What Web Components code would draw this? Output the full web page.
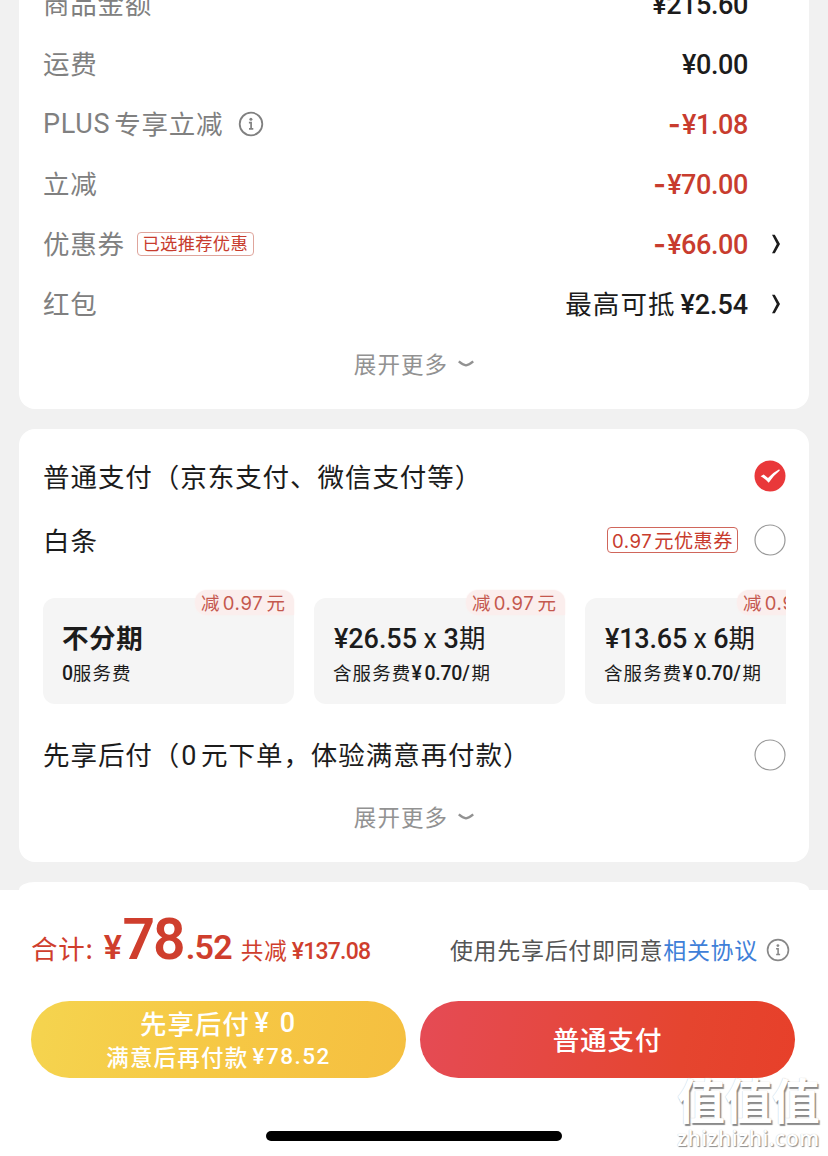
<!DOCTYPE html>
<html lang="zh-CN">
<head>
<meta charset="utf-8">
<title>订单结算</title>
<style>
html,body{margin:0;padding:0}
body{width:828px;height:1156px;overflow:hidden;background:#f1f1f1;font-family:"Noto Sans CJK SC",sans-serif;color:#1c1c1c}
</style>
</head>
<body>
<checkout-page></checkout-page>
<script>
const define=(name,css,html)=>{
  const t=document.createElement('template');
  t.innerHTML=`<style>*{box-sizing:border-box}${css}</style>${html}`;
  customElements.define(name,class extends HTMLElement{
    constructor(){super();this.attachShadow({mode:'open'}).append(t.content.cloneNode(true));}
  });
};

define('money-text',
  `:host{display:inline-block;font-family:Roboto,"Noto Sans CJK SC",sans-serif;font-weight:500;font-size:27px;letter-spacing:-.4px;white-space:pre}
   ::slotted(i){font-style:normal;font-family:Inter,sans-serif;letter-spacing:1.4px;font-weight:700}`,
  `<slot></slot>`);

define('info-icon',
  `:host{display:block;width:26px;height:26px;color:#808080}svg{display:block;width:100%;height:100%}`,
  `<svg viewBox="0 0 26 26" fill="none" stroke="currentColor" stroke-width="1.8"><circle cx="13" cy="13" r="11.3"/><path d="M10.9 11.6h2.2v6.1M11 17.8h4.3" stroke-width="1.7"/><circle cx="12.9" cy="8.2" r="1.5" fill="currentColor" stroke="none"/></svg>`);

define('chevron-icon',
  `:host{display:block;width:10px;height:20px}svg{display:block}`,
  `<svg width="10" height="20" viewBox="0 0 10 20"><path d="M1 0.8H3.8L9 10 3.8 19.2H1L5.8 10Z" fill="#1c1c1c"/></svg>`);

define('price-row',
  `:host{display:flex;height:60px;align-items:center;padding:0 61px 0 24px;color:#808080;font-size:26.5px;letter-spacing:.75px;line-height:36px;white-space:nowrap}
   .k{display:flex;align-items:center}
   .k ::slotted(span){margin-top:-3px}
   .v{margin-left:auto;display:flex;align-items:center;color:#1c1c1c}
   .v ::slotted(money-text){margin-top:2px}
   .v ::slotted(span){margin-top:-3px}
   :host([minus]) .v{color:#c83c2e}
   .end{width:0}.end ::slotted(*){margin-left:22.5px}`,
  `<span class="k"><slot></slot></span><span class="v"><slot name="value"></slot></span><span class="end"><slot name="end"></slot></span>`);

define('coupon-tag',
  `:host{display:flex;align-items:center;justify-content:center;width:117px;height:24px;border:1px solid #dfa59c;border-radius:4px;color:#c83c2e;font-size:17.3px;letter-spacing:.3px;white-space:nowrap}
   .x{line-height:22px;height:24px}
   :host([large]){width:131px;height:26px;border-color:#d0665b;font-size:19.2px;letter-spacing:.5px}
   :host([large]) .x{height:23px}`,
  `<span class="x"><slot></slot></span>`);

define('expand-more',
  `:host{display:flex;height:36px;align-items:center;justify-content:center;color:#929292;font-size:22.5px;letter-spacing:1.1px}.x{line-height:36px;margin-top:-3px}svg{margin-left:10px}`,
  `<span class="x"><slot></slot></span><svg width="16" height="8" viewBox="0 0 16 8" fill="none" stroke="#929292" stroke-width="2.4"><path d="M.8 1.4Q5 5 8 5.4Q11 5 15.2 1.4"/></svg>`);

define('white-card',
  `:host{display:block;background:#fff;border-radius:16px;margin:0 19px}`,
  `<slot></slot>`);

define('radio-dot',
  `:host{display:block;width:32px;height:32px}.on{display:none}:host([checked]) .on{display:block}:host([checked]) .off{display:none}svg{display:block}`,
  `<svg class="off" width="32" height="32"><circle cx="16" cy="16" r="15" fill="#fff" stroke="#989898" stroke-width="1.2"/></svg>
   <svg class="on" width="32" height="32"><circle cx="16" cy="16" r="15.5" fill="#e9383a"/><path d="M6.6 16.2L9.7 14.4L14 17.9Q19 12.4 25.2 9.2L25.8 10.4Q19.5 15.2 14.7 22.8Q11 18.8 6.6 16.2Z" fill="#fff"/></svg>`);

define('pay-option',
  `:host{display:flex;height:64px;align-items:center;padding:0 23px 0 24px;font-size:26.5px;letter-spacing:.95px;line-height:36px;white-space:nowrap}
   .l{margin-top:-1px}
   .e{margin-left:auto;display:flex;align-items:center;gap:16px}`,
  `<span class="l"><slot></slot></span><span class="e"><slot name="end"></slot></span>`);

define('plan-card',
  `:host{display:block;position:relative;flex:0 0 251px;height:106px;background:#f5f5f5;border-radius:12px;padding:22px 0 0 20px;white-space:nowrap}
   .t{height:36px;line-height:36px;font-size:26.5px;letter-spacing:.6px;display:flex;align-items:center}
   .s{height:34px;line-height:34px;font-size:18.5px;letter-spacing:1.1px;display:flex;align-items:center}
   .t ::slotted(span),.s ::slotted(span){margin-top:-2px}
   .t ::slotted(money-text),.s ::slotted(money-text){margin-top:2px}
   .b{position:absolute;right:0;top:-8px;width:99px;height:25px;border-radius:12px 12px 0 12px;background:#fbeeed;box-shadow:0 0 2px #fbeeed;color:#c4584e;font-size:18.5px;line-height:25px;padding-left:6px;display:flex;letter-spacing:.2px}
   .b i{font-style:normal;font-family:Inter,sans-serif;font-size:18.5px;letter-spacing:.7px;margin:1px 3px 0}`,
  `<div class="t"><slot name="title"></slot></div><div class="s"><slot name="sub"></slot></div><div class="b">减<i>0.97</i>元</div>`);

define('plan-strip',
  `:host{display:flex;gap:20px;margin:0 23px 0 24px;padding-top:20px;height:126px;overflow:hidden}`,
  `<slot></slot>`);

define('pay-button',
  `:host{display:flex;flex-direction:column;align-items:center;justify-content:center;width:375px;height:77px;border-radius:39px;color:#fff;font-weight:500;font-size:26.5px;letter-spacing:.9px;line-height:34px;white-space:pre;background:linear-gradient(100deg,#e54b55,#e5452f 70%,#e7402a)}
   :host([later]){background:linear-gradient(100deg,#f5d44f,#f6c945 45%,#f5bf40)}`,
  `<slot></slot>`);

define('site-watermark',
  `:host{position:absolute;left:677px;top:1072px;width:150px;height:84px;color:#fff;white-space:nowrap}
   .a{font-size:48px;font-weight:700;line-height:52px;height:54px;letter-spacing:-.6px;text-shadow:1.5px 1.5px 1px #8a8a8a,0 0 1px #bbb}
   .b{font-family:"Open Sans",sans-serif;font-weight:600;font-size:20.8px;line-height:24px;letter-spacing:.55px;text-shadow:1px 1px 1px #8b8b8b,0 0 1px #bbb}`,
  `<div class="a">值值值</div><div class="b">zhizhizhi.com</div>`);

define('checkout-page',
  `:host{display:flex;flex-direction:column;position:relative;width:828px;height:1156px;overflow:hidden}
   .sum{height:409px;flex:none;margin-bottom:20px;border-radius:0 0 16px 16px}
   .sum price-row:first-child{margin-top:-26px}
   .sum expand-more{margin-top:12px}
   .pay{height:433px;flex:none;padding-top:15px}
   .next{height:8px;flex:none;margin-top:20px;border-radius:16px 16px 0 0 / 8px 8px 0 0}
   .foot{flex:1;background:#fff;position:relative}
   .total{display:flex;height:111px;align-items:baseline;padding:20px 38px 0 31px;color:#cf3e2d;white-space:nowrap;font-size:26.5px;line-height:60px}
   .agree{margin-left:auto;font-size:23px;letter-spacing:.7px;color:#555;display:flex;align-items:center}
   .agree b{font-weight:400;color:#3f80d8}
   .agree info-icon{width:24px;height:24px;margin:2px 0 0 8px;color:#888}
   .btns{display:flex;gap:14px;padding-left:31px}
   .home{width:296px;height:10px;border-radius:5px;background:#000;margin:53px 0 0 266px}
   .pl{font-size:27px;letter-spacing:.7px;font-weight:400;margin-right:4px}
   pay-button div{display:flex;align-items:center}
   .q{font-weight:400}
   .n{font-size:19.5px;letter-spacing:-.25px}`,
  `<white-card class="sum">
    <price-row><span>商品金额</span><money-text slot="value">¥215.60</money-text></price-row>
    <price-row><span>运费</span><money-text slot="value">¥0.00</money-text></price-row>
    <price-row minus><money-text class="pl">PLUS</money-text><span>专享立减</span><info-icon style="margin-left:15px"></info-icon><money-text slot="value"><i>-</i>¥1.08</money-text></price-row>
    <price-row minus><span>立减</span><money-text slot="value"><i>-</i>¥70.00</money-text></price-row>
    <price-row minus><span>优惠券</span><coupon-tag style="margin-left:12px">已选推荐优惠</coupon-tag><money-text slot="value"><i>-</i>¥66.00</money-text><chevron-icon slot="end"></chevron-icon></price-row>
    <price-row><span>红包</span><span slot="value" style="margin-right:5px;letter-spacing:1.1px">最高可抵</span><money-text slot="value" style="letter-spacing:-.1px">¥2.54</money-text><chevron-icon slot="end"></chevron-icon></price-row>
    <expand-more>展开更多</expand-more>
  </white-card>
  <white-card class="pay">
    <pay-option>普通支付（京东支付、微信支付等）<radio-dot slot="end" checked></radio-dot></pay-option>
    <pay-option>白条<coupon-tag slot="end" large><span style="font-family:Inter,sans-serif;margin-right:2px;font-size:18.6px">0.97</span>元优惠券</coupon-tag><radio-dot slot="end"></radio-dot></pay-option>
    <plan-strip style="margin-top:6px">
      <plan-card><span slot="title" style="font-weight:700;margin-left:-1px">不分期</span><money-text slot="sub" class="n" style="margin-left:-1px">0</money-text><span slot="sub">服务费</span></plan-card>
      <plan-card><money-text slot="title" style="letter-spacing:-.05px">¥26.55 <span class="q">x</span> 3</money-text><span slot="title">期</span><span slot="sub" style="margin-left:-1px">含服务费</span><money-text slot="sub" class="n"><span style="margin-right:3px">¥</span>0.70/</money-text><span slot="sub" style="margin-left:2px">期</span></plan-card>
      <plan-card><money-text slot="title" style="letter-spacing:-.2px">¥13.65 <span class="q">x</span> 6</money-text><span slot="title">期</span><span slot="sub" style="margin-left:-1px">含服务费</span><money-text slot="sub" class="n"><span style="margin-right:3px">¥</span>0.70/</money-text><span slot="sub" style="margin-left:2px">期</span></plan-card>
    </plan-strip>
    <pay-option style="margin-top:19px">先享后付（<money-text style="font-weight:400;margin:0 5px 0 1px">0</money-text>元下单，体验满意再付款）<radio-dot slot="end"></radio-dot></pay-option>
    <expand-more style="margin-top:12px">展开更多</expand-more>
  </white-card>
  <white-card class="next"></white-card>
  <div class="foot">
    <div class="total">
      <span style="letter-spacing:.8px">合计:</span>
      <money-text style="font-size:34px;margin-left:10px;font-weight:600">¥</money-text>
      <money-text style="font-size:57px;letter-spacing:-2px;font-weight:600;margin-left:1px">78</money-text>
      <money-text style="font-size:34px;letter-spacing:-.8px;margin-left:2px;font-weight:600">.52</money-text>
      <span style="font-size:22.5px;letter-spacing:1px;margin-left:9px">共减</span>
      <money-text style="font-size:23px;margin-left:4px;letter-spacing:-.8px">¥137.08</money-text>
      <span class="agree">使用先享后付即同意<b>相关协议</b><info-icon></info-icon></span>
    </div>
    <div class="btns">
      <pay-button later><div>先享后付<money-text style="letter-spacing:2px;margin-left:5px">¥ 0</money-text></div><div style="font-size:22.5px;letter-spacing:1.2px;margin-top:-1px">满意后再付款<money-text style="font-size:22.5px;letter-spacing:1.5px;margin-left:4px">¥78.52</money-text></div></pay-button>
      <pay-button><div style="margin-top:-2px">普通支付</div></pay-button>
    </div>
    <div class="home"></div>
  </div>
  <site-watermark></site-watermark>`);
</script>
</body>
</html>
